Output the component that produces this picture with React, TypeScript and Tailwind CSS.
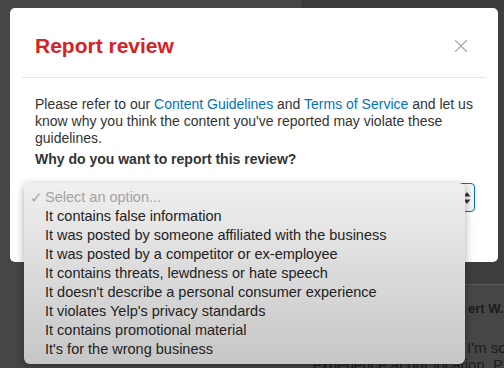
import { X } from "lucide-react";

const reasons = [
  "It contains false information",
  "It was posted by someone affiliated with the business",
  "It was posted by a competitor or ex-employee",
  "It contains threats, lewdness or hate speech",
  "It doesn't describe a personal consumer experience",
  "It violates Yelp's privacy standards",
  "It contains promotional material",
  "It's for the wrong business",
];

const font = "font-['Helvetica_Neue','Liberation_Sans',Arial,sans-serif]";

export default function App() {
  return (
    <div className={`relative h-[368px] w-[504px] overflow-hidden bg-[#464646] ${font}`}>
      {/* dimmed page behind the modal */}
      <div className="flex h-full">
        <div className="w-[302px] shrink-0" />
        <div className="flex-1 flex flex-col">
          <div className="h-[10px] shrink-0 border-b border-l border-[#363636] bg-[#3c3c3c]" />
          <div className="h-[275px] shrink-0 border-b border-[#5a5a5a] bg-[#3e3e3e]" />
          <div className="shrink-0 pl-[166px] pt-[16px] text-[13px] leading-[15px] font-bold text-[#1c1c1c] whitespace-nowrap">
            ert W. on
          </div>
          <div className="shrink-0 pl-[165px] pt-[23px] text-[15px] leading-[17px] text-[#1c1c1c] whitespace-nowrap">
            I'm so
          </div>
          <div className="shrink-0 pl-[11px] text-[15px] leading-[17px] text-[#1c1c1c] whitespace-nowrap">
            experience at our location. Please
          </div>
        </div>
      </div>

      {/* modal */}
      <div className="absolute left-[10px] top-[8px] h-[254px] w-[488px] rounded-[5px] bg-white">
        <div className="flex items-center justify-between pl-[25px] pr-[26px] pt-[25px] pb-[18px]">
          <h2 className="text-[21px] leading-[26px] font-bold text-[#d32323]">Report review</h2>
          <X className="h-[22px] w-[22px] text-[#a6a6a6]" strokeWidth={1.2} />
        </div>
        <div className="mx-[12px] h-px bg-[#e6e6e6]" />
        <div className="pl-[25px] pr-[23px] pt-[18px]">
          <p className="text-[14px] leading-[17px] text-[#333]">
            Please refer to our <span className="text-[#0073bb]">Content Guidelines</span> and{" "}
            <span className="text-[#0073bb]">Terms of Service</span> and let us know why you think the
            content you've reported may violate these guidelines.
          </p>
          <p className="mt-[4px] text-[14px] leading-[17px] font-bold text-[#333]">
            Why do you want to report this review?
          </p>
          <div className="mt-[15px] flex h-[29px] items-center justify-end rounded-[4px] border border-[#0073bb] bg-[#f5f5f5] pr-[3px]">
            <svg width="8" height="14" viewBox="0 0 8 14" className="text-[#333]">
              <path d="M4 1 L7.5 5.5 H0.5 Z" fill="currentColor" />
              <path d="M4 13 L7.5 8.5 H0.5 Z" fill="currentColor" />
            </svg>
          </div>
        </div>
      </div>

      {/* native select menu */}
      <div className="absolute left-[24px] top-[183px] w-[441px] rounded-[6px] bg-gradient-to-b from-[#f0f0f0] to-[#c6c6c6] py-[5px] shadow-[0_2px_8px_rgba(0,0,0,0.35)] text-[14.5px] leading-[19px]">
        <div className="flex items-center text-[#a3a3a3]">
          <span className="w-[21px] pl-[6px] text-[15px]">✓</span>
          <span>Select an option...</span>
        </div>
        {reasons.map((r) => (
          <div key={r} className="pl-[21px] text-[#222]">
            {r}
          </div>
        ))}
      </div>
    </div>
  );
}
